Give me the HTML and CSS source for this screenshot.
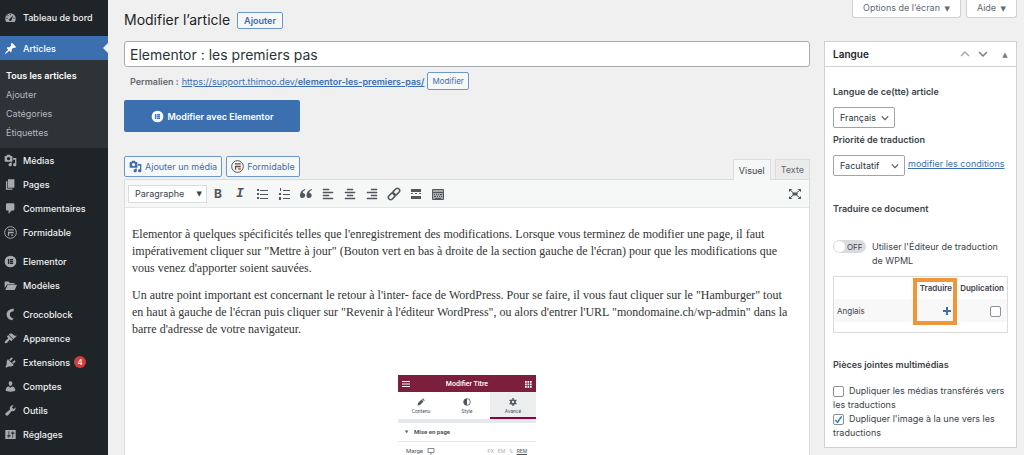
FILE: index.html
```html
<!DOCTYPE html>
<html lang="fr">
<head>
  <meta charset="UTF-8" />
  <meta name="viewport" content="width=device-width, initial-scale=1.0"/>
  <title>Modifier l’article</title>
  <link rel="stylesheet" href="styles.css">
</head>
<body>

  <!-- shared icons -->
  <svg class="sprite" aria-hidden="true">
    <symbol id="i-media" viewBox="0 0 20 20"><path d="M13 11V4c0-.55-.45-1-1-1h-1.670L9 1H5L3.670 3H2c-.55 0-1 .45-1 1v7c0 .55.45 1 1 1h10c.55 0 1-.45 1-1zM7 4.500c1.380 0 2.500 1.120 2.500 2.500S8.380 9.500 7 9.500 4.500 8.380 4.500 7 5.620 4.500 7 4.500zM14 6h5v10.500c0 1.380-1.120 2.500-2.500 2.500S14 17.880 14 16.500s1.120-2.500 2.500-2.500c.17 0 .34.02.5.05V9h-3V6zm-4 8.050V13h2v3.500c0 1.380-1.120 2.500-2.500 2.500S7 17.880 7 16.500 8.120 14 9.500 14c.17 0 .34.02.5.05z"/></symbol>
    <symbol id="i-elementor" viewBox="0 0 20 20"><path fill-rule="evenodd" d="M10 1a9 9 0 1 0 0 18 9 9 0 0 0 0-18zM6 6h2v8H6zm3 0h5v2H9zm0 3h5v2H9zm0 3h5v2H9z"/></symbol>
  </svg>

  <div class="app">
    <nav class="menu">
      <a class="menu-item" href="#"><svg viewBox="0 0 20 20"><path fill-rule="evenodd" d="M3.800 17h12.400c1.300-1.600 1.800-3.400 1.800-5.500a8 8 0 0 0-16 0c0 2.100.5 3.900 1.800 5.500zM10 4.500a1 1 0 1 1 0 2 1 1 0 0 1 0-2zM6 6a1 1 0 1 1 0 2 1 1 0 0 1 0-2zm8.500.2L11.800 13a2 2 0 1 1-2.600-1.400zM4.500 10a1 1 0 1 1 0 2 1 1 0 0 1 0-2zm11 0a1 1 0 1 1 0 2 1 1 0 0 1 0-2z"/></svg>Tableau de bord</a>
      <a class="menu-item current" href="#"><svg viewBox="0 0 20 20"><path d="M10.440 3.020l1.820-1.820 6.360 6.350-1.830 1.820c-1.050-.68-2.480-.57-3.410.36l-.75.75c-.92.93-1.040 2.350-.35 3.410l-1.830 1.820-2.410-2.410-2.800 2.790c-.42.42-3.380 2.710-3.800 2.290s1.860-3.390 2.280-3.810l2.790-2.790L4.100 9.360l1.830-1.820c1.050.69 2.480.57 3.400-.36l.75-.75c.93-.92 1.050-2.350.36-3.410z"/></svg>Articles</a>
      <div class="submenu">
        <a class="active" href="#">Tous les articles</a>
        <a href="#">Ajouter</a>
        <a href="#">Catégories</a>
        <a href="#">Étiquettes</a>
      </div>
      <a class="menu-item" href="#"><svg><use href="#i-media"/></svg>Médias</a>
      <a class="menu-item" href="#"><svg viewBox="0 0 20 20"><path d="M6 15V2h10v13H6zm-1 1h8v2H3V5h2v11z"/></svg>Pages</a>
      <a class="menu-item" href="#"><svg viewBox="0 0 20 20"><path d="M5 2h9c1.100 0 2 .9 2 2v7c0 1.100-.9 2-2 2h-2l-5 5v-5H5c-1.100 0-2-.9-2-2V4c0-1.100.9-2 2-2z"/></svg>Commentaires</a>
      <a class="menu-item" href="#"><svg viewBox="0 0 20 20"><circle cx="10" cy="10" r="9" fill="none" stroke="currentColor" stroke-width="1.500"/><path d="M6 5h9v2H6zM6 9h9v2H8v4H6zm5 4h3v2h-3z"/></svg>Formidable</a>
      <a class="menu-item group" href="#"><svg><use href="#i-elementor"/></svg>Elementor</a>
      <a class="menu-item" href="#"><svg viewBox="0 0 20 20"><path d="M1 14V4h6l2 2h7v2H5zM5.500 9H20l-3.500 8H2z"/></svg>Modèles</a>
      <a class="menu-item group" href="#"><svg viewBox="0 0 20 20"><path d="M15 1C8 1 4 5 4 10c0 4 3 8 8 9l3-3c-4-.5-6-3-6-6 0-4 3-5 6-5z"/></svg>Crocoblock</a>
      <a class="menu-item" href="#"><svg viewBox="0 0 20 20"><path d="M14.480 11.060L7.410 3.990l1.500-1.500c.5-.56 2.300-.47 3.510.32 1.210.8 1.430 1.280 2.910 2.100 1.180.64 2.450 1.260 4.450.85zm-.71.71L6.700 4.700 4.930 6.470c-.39.39-.39 1.020 0 1.410l1.060 1.060c.39.39.39 1.030 0 1.420-.6.6-1.430 1.110-2.210 1.690-.35.26-.7.53-1.010.84C1.430 14.230.4 16.080 1.400 17.070c.99 1 2.840-.03 4.180-1.360.31-.31.58-.66.85-1.020.57-.78 1.080-1.610 1.690-2.210.39-.39 1.020-.39 1.410 0l1.060 1.060c.39.39 1.020.39 1.410 0z"/></svg>Apparence</a>
      <a class="menu-item" href="#"><svg viewBox="0 0 20 20"><path d="M13.110 4.360L9.870 7.600 8 5.730l3.240-3.240c.35-.34 1.050-.2 1.560.32.52.51.66 1.210.31 1.550zm-8 1.770l.91-1.120 9.010 9.010-1.190.84c-.71.71-2.630 1.160-3.820 1.160H6.140L4.900 17.260c-.59.59-1.540.59-2.120 0-.59-.58-.59-1.530 0-2.120l1.240-1.240v-3.880c0-1.130.4-3.190 1.090-3.890zm7.260 3.970l3.240-3.240c.34-.35 1.040-.21 1.550.31.52.51.66 1.210.31 1.550l-3.240 3.250z"/></svg>Extensions <span class="badge">4</span></a>
      <a class="menu-item" href="#"><svg viewBox="0 0 20 20"><path d="M10 9.250c-2.270 0-2.730-3.440-2.730-3.440C7 4.020 7.820 2 9.970 2c2.160 0 2.980 2.020 2.710 3.810 0 0-.41 3.440-2.680 3.440zm0 2.570L12.720 10c2.390 0 4.520 2.330 4.520 4.530v2.490s-3.650 1.130-7.240 1.130c-3.650 0-7.240-1.130-7.240-1.130v-2.490c0-2.250 1.940-4.480 4.470-4.480z"/></svg>Comptes</a>
      <a class="menu-item" href="#"><svg viewBox="0 0 20 20"><path d="M16.680 9.770c-1.340 1.340-3.300 1.670-4.950.99l-5.410 6.520c-.99.99-2.590.99-3.580 0s-.99-2.590 0-3.570l6.520-5.420c-.68-1.650-.35-3.610.99-4.950 1.280-1.280 3.120-1.620 4.720-1.060l-2.890 2.890 2.820 2.820 2.860-2.870c.53 1.580.18 3.390-1.080 4.650z"/></svg>Outils</a>
      <a class="menu-item" href="#"><svg viewBox="0 0 20 20"><path fill-rule="evenodd" d="M2 3h16v14H2zM7 5v6H5v2h2v2h1v-2h2v-2H8V5zm6 0v2h-2v2h2v6h1V9h2V7h-2V5z"/></svg>Réglages</a>
    </nav>

    <main class="content">
      <header class="top">
        <h1>Modifier l’article</h1>
        <a class="btn add" href="#">Ajouter</a>
        <div class="screen-links">
          <button type="button">Options de l’écran <i>▼</i></button>
          <button type="button">Aide <i>▼</i></button>
        </div>
      </header>

      <div class="columns">
        <section class="post">
          <input class="post-title" type="text" aria-label="Titre" value="Elementor : les premiers pas">
          <div class="permalink">
            <strong>Permalien :</strong>
            <a href="#">https://support.thimoo.dev/<b>elementor-les-premiers-pas/</b></a>
            <button class="btn small" type="button">Modifier</button>
          </div>
          <button class="elementor-btn" type="button"><svg><use href="#i-elementor"/></svg>Modifier avec Elementor</button>

          <div class="editor-top">
            <button class="btn" type="button"><svg><use href="#i-media"/></svg>Ajouter un média</button>
            <button class="btn" type="button"><svg viewBox="0 0 20 20"><circle cx="10" cy="10" r="9" fill="none" stroke="#4d5055" stroke-width="1.500"/><path fill="#4d5055" d="M6 5h9v2H6zM6 9h9v2H8v4H6z"/><path fill="#f05a24" d="M11 12h4v3h-4z"/></svg>Formidable</button>
            <div class="tabs">
              <button class="tab on" type="button">Visuel</button>
              <button class="tab" type="button">Texte</button>
            </div>
          </div>

          <div class="editor">
            <div class="toolbar">
              <button class="format" type="button">Paragraphe <i>▼</i></button>
              <button class="tool" type="button" aria-label="Gras"><b>B</b></button>
              <button class="tool" type="button" aria-label="Italique"><em>I</em></button>
              <button class="tool" type="button" aria-label="Liste à puces"><svg viewBox="0 0 14 14"><path d="M2 2h2v2H2zm0 4h2v2H2zm0 4h2v2H2zM5 3h8v1H5zm0 4h8v1H5zm0 4h8v1H5z"/></svg></button>
              <button class="tool" type="button" aria-label="Liste numérotée"><svg viewBox="0 0 14 14"><path d="M3 1h1v3H3zM2 6h2v2H2zm0 4h2v3H2zM6 3h7v1H6zm0 4h7v1H6zm0 4h7v1H6z"/></svg></button>
              <button class="tool" type="button" aria-label="Citation"><svg viewBox="0 0 14 14"><path d="M6 2C3 3 1 5 1 8.500a2.600 2.600 0 1 0 2.800-2.600C3.800 4.500 4.800 3.500 6.500 3zM12.500 2c-3 1-5 3-5 6.500a2.600 2.600 0 1 0 2.800-2.600c0-1.400 1-2.400 2.700-2.900z"/></svg></button>
              <button class="tool" type="button" aria-label="Aligner à gauche"><svg viewBox="0 0 14 14"><path d="M2 2h6v1H2zm0 3h10v1H2zm0 3h6v1H2zm0 3h10v1H2z" stroke="currentColor" stroke-width=".5"/></svg></button>
              <button class="tool" type="button" aria-label="Centrer"><svg viewBox="0 0 14 14"><path d="M4 2h6v1H4zM2 5h10v1H2zm2 3h6v1H4zm-2 3h10v1H2z" stroke="currentColor" stroke-width=".5"/></svg></button>
              <button class="tool" type="button" aria-label="Aligner à droite"><svg viewBox="0 0 14 14"><path d="M6 2h6v1H6zM2 5h10v1H2zm4 3h6v1H6zm-4 3h10v1H2z" stroke="currentColor" stroke-width=".5"/></svg></button>
              <button class="tool" type="button" aria-label="Lien"><svg viewBox="0 0 14 14"><g fill="none" stroke="currentColor" stroke-width="1.600" transform="rotate(-45 7 7)"><rect x="0" y="4.700" width="7.500" height="4.600" rx="2.300"/><rect x="6.500" y="4.700" width="7.500" height="4.600" rx="2.300"/></g></svg></button>
              <button class="tool" type="button" aria-label="Lire la suite"><svg viewBox="0 0 14 14"><path d="M2 2h10v3H2zm0 4h2v1H2zm4 0h2v1H6zm4 0h2v1h-2zM2 9h10v3H2z"/></svg></button>
              <button class="tool" type="button" aria-label="Barre d’outils"><svg viewBox="0 0 14 14"><path fill="#a7aaad" stroke="currentColor" d="M1.500 2.500h11v10h-11z"/><path d="M2 5h10v1H2zm1 2h1v1H3zm2 0h1v1H5zm2 0h1v1H7zm2 0h2v1H9zM3 9h2v1H3zm3 0h1v1H6zm2 0h1v1H8zm2 0h1v1h-1zm-6 2h6v1H4z"/></svg></button>
              <button class="tool full" type="button" aria-label="Plein écran"><svg viewBox="0 0 14 14"><path d="M1 2h3.500L1 5zm12 0H9.500L13 5zM1 12h3.500L1 9zm12 0H9.500L13 9zM4.500 5.500h5v3h-5z"/><path d="M2 3l3.500 3M12 3L8.500 6M2 11l3.500-3m6.500 3L8.500 8" stroke="currentColor"/></svg></button>
            </div>
            <div class="page">
              <p>Elementor à quelques spécificités telles que l'enregistrement des modifications. Lorsque vous terminez de modifier une page, il faut impérativement cliquer sur "Mettre à jour" (Bouton vert en bas à droite de la section gauche de l'écran) pour que les modifications que vous venez d'apporter soient sauvées.</p>
              <p>Un autre point important est concernant le retour à l'inter- face de WordPress. Pour se faire, il vous faut cliquer sur le "Hamburger" tout en haut à gauche de l'écran puis cliquer sur "Revenir à l'éditeur WordPress", ou alors d'entrer l'URL "mondomaine.ch/wp-admin" dans la barre d'adresse de votre navigateur.</p>

              <div class="panel">
                <div class="panel-head">
                  <svg viewBox="0 0 8 8"><path d="M0 1h8v1H0zm0 2.500h8v1H0zM0 6h8v1H0z"/></svg>
                  <span>Modifier Titre</span>
                  <svg viewBox="0 0 8 8"><path d="M1 1h1.700v1.700H1zm2.500 0h1.700v1.700H3.500zM6 1h1.700v1.700H6zM1 3.500h1.700v1.700H1zm2.500 0h1.700v1.700H3.500zm2.500 0h1.700v1.700H6zM1 6h1.700v1.700H1zm2.500 0h1.700v1.700H3.500zM6 6h1.700v1.700H6z"/></svg>
                </div>
                <div class="panel-tabs">
                  <div><svg viewBox="0 0 8 8"><path d="M.5 7.500L1 5l3.500-3.500 2 2L3 7zM5 1l.8-.7 2 1.900L7 3z"/></svg>Contenu</div>
                  <div><svg viewBox="0 0 8 8"><circle cx="4" cy="4" r="3.300" fill="none" stroke="currentColor" stroke-width=".8"/><path d="M4 .7a3.300 3.300 0 0 0 0 6.600z"/></svg>Style</div>
                  <div class="on"><svg viewBox="0 0 8 8"><circle cx="4" cy="4" r="2" fill="none" stroke="currentColor" stroke-width="1.700"/><path d="M3.300 0h1.400v1.500H3.300zm0 6.500h1.400V8H3.300zM.2 2.600l.7-1.200 1.300.8-.7 1.200zm5.600 3.200l.7-1.200 1.300.8-.7 1.200zM.2 5.400l1.300-.8.7 1.200-1.300.8zm5.600-3.200l1.300-.8.7 1.200-1.300.8z"/></svg>Avancé</div>
                </div>
                <div class="panel-section"><i>▼</i>Mise en page</div>
                <div class="panel-row">
                  <span>Marge</span>
                  <svg viewBox="0 0 8 8"><path d="M1 1.500h6v4H1zM3 7h2" fill="none" stroke="currentColor" stroke-width=".7"/></svg>
                  <small>PX</small><small>EM</small><small>%</small><small class="unit">REM</small>
                </div>
              </div>
            </div>
          </div>
        </section>

        <aside class="metabox">
          <div class="metabox-head">
            <h2>Langue</h2>
            <button type="button" aria-label="Monter"><svg class="dim" viewBox="0 0 10 10"><path d="M1 7l4-4 4 4"/></svg></button>
            <button type="button" aria-label="Descendre"><svg viewBox="0 0 10 10"><path d="M1 3l4 4 4-4"/></svg></button>
            <button type="button" aria-label="Replier"><i>▲</i></button>
          </div>
          <div class="metabox-body">
            <label class="label" for="lang">Langue de ce(tte) article</label>
            <select id="lang"><option>Français</option></select>
            <label class="label" for="priority">Priorité de traduction</label>
            <div class="priority">
              <select id="priority"><option>Facultatif</option></select>
              <a href="#">modifier les conditions</a>
            </div>

            <h3 class="doc">Traduire ce document</h3>
            <label class="switch-row">
              <input class="switch" type="checkbox">
              <span class="track">OFF</span>
              <span>Utiliser l'Éditeur de traduction de WPML</span>
            </label>

            <table class="langs">
              <thead>
                <tr><th></th><th class="translate">Traduire</th><th class="duplicate">Duplication</th></tr>
              </thead>
              <tbody>
                <tr>
                  <td>Anglais</td>
                  <td><a href="#" aria-label="Traduire en anglais"><svg viewBox="0 0 10 10"><path d="M4 1h2v3h3v2H6v3H4V6H1V4h3z"/></svg></a></td>
                  <td><input type="checkbox" aria-label="Dupliquer en anglais"></td>
                </tr>
              </tbody>
            </table>

            <h3 class="files">Pièces jointes multimédias</h3>
            <label class="check"><input type="checkbox">Dupliquer les médias transférés vers les traductions</label>
            <label class="check"><input type="checkbox" checked>Dupliquer l'image à la une vers les traductions</label>
          </div>
        </aside>
      </div>
    </main>
  </div>

</body>
</html>
```
FILE: styles.css
```css
*,
*::before,
*::after {
  box-sizing: border-box;
}

body {
  margin: 0;
  background: #f0f0f1;
  color: #3c434a;
  font-family: Inter, "Liberation Sans", sans-serif;
  font-size: 9px;
}

button, input, select {
  font: inherit;
  color: inherit;
  margin: 0;
}

button {
  cursor: pointer;
}

a {
  color: #3b6fb0;
}

i {
  font-style: normal;
  font-family: "DejaVu Sans", sans-serif;
}

svg {
  fill: currentColor;
  flex: none;
}

h1, h2, h3 {
  margin: 0;
}

.sprite {
  display: none;
}

.app {
  display: flex;
  height: 100vh;
  overflow: hidden;
}

/* left menu */
.menu {
  flex: none;
  width: 108px;
  padding-top: 5px;
  background: #1f2428;
}

.menu-item {
  display: flex;
  align-items: center;
  gap: 6px;
  height: 24px;
  padding-left: 4px;
  color: #f0f0f1;
  font-weight: 500;
  text-decoration: none;
}

.menu-item svg {
  width: 13px;
  height: 13px;
  color: #a7aaad;
}

.menu-item.group {
  margin-top: 5px;
}

.menu-item.current {
  position: relative;
  margin-top: 7px;
  background: #3b6fb0;
  color: #fff;
}

.menu-item.current svg {
  color: #fff;
}

.menu-item.current::after {
  content: "";
  position: absolute;
  right: 0;
  top: 7px;
  border: 5px solid transparent;
  border-left-width: 0;
  border-right-color: #f0f0f1;
}

.submenu {
  padding: 6px 0 6px 6px;
  background: #2e3338;
}

.submenu a {
  display: block;
  color: #b4b9be;
  line-height: 19px;
  text-decoration: none;
}

.submenu a.active {
  color: #fff;
  font-weight: 600;
}

.badge {
  width: 12px;
  border-radius: 6px;
  margin-left: -2px;
  background: #d33c3c;
  color: #fff;
  font-size: 8px;
  line-height: 12px;
  text-align: center;
}

/* main area */
.content {
  flex: 1;
  min-width: 0;
  display: flex;
  flex-direction: column;
  padding: 0 7px 0 16px;
}

.top {
  display: flex;
  align-items: flex-start;
  height: 41px;
}

.top h1 {
  margin-top: 10px;
  color: #1d2327;
  font-size: 14px;
  font-weight: 400;
  line-height: 20px;
}

.btn {
  display: flex;
  align-items: center;
  gap: 3px;
  height: 21px;
  padding: 0 4px;
  border: 1px solid #6f97cb;
  border-radius: 2px;
  background: #f6f7f7;
  color: #3b6fb0;
  text-decoration: none;
  white-space: nowrap;
}

.btn.add {
  height: 17px;
  margin: 12px 0 0 7px;
  padding: 0 6px;
  font-weight: 600;
}

.btn.small {
  height: 18px;
  font-size: 8px;
}

.screen-links {
  display: flex;
  gap: 5px;
  margin-left: auto;
}

.screen-links button {
  height: 18px;
  padding: 0 10px;
  border: 1px solid #cfd1d4;
  border-top: 0;
  border-radius: 0 0 3px 3px;
  background: #fff;
  color: #646970;
  line-height: 14px;
}

.screen-links i {
  margin-left: 2px;
  font-size: 7px;
}

.columns {
  flex: 1;
  min-height: 0;
  display: grid;
  grid-template-columns: 1fr 193px;
  gap: 14px;
}

.post {
  display: flex;
  flex-direction: column;
  min-width: 0;
  min-height: 0;
}

.post-title {
  width: 100%;
  height: 26px;
  padding: 0 5px;
  border: 1px solid #a9adb2;
  border-radius: 3px;
  background: #fff;
  color: #2c3338;
  font-size: 14px;
}

.permalink {
  display: flex;
  align-items: center;
  gap: 3px;
  height: 18px;
  margin: 5px 0 10px;
  padding-left: 6px;
}

.permalink strong {
  color: #646970;
  font-weight: 600;
}

.permalink b {
  font-weight: 600;
}

.elementor-btn {
  flex: none;
  display: flex;
  align-items: center;
  justify-content: center;
  gap: 4px;
  width: 176px;
  height: 32px;
  border: 0;
  border-radius: 2px;
  background: #3b6fb0;
  color: #fff;
  font-weight: 600;
}

.elementor-btn svg {
  width: 13px;
  height: 13px;
}

.editor-top {
  flex: none;
  display: flex;
  align-items: flex-start;
  gap: 4px;
  height: 23px;
  margin-top: 24px;
}

.editor-top .btn svg {
  width: 13px;
  height: 13px;
}

.tabs {
  display: flex;
  align-self: flex-end;
  gap: 4px;
  margin-left: auto;
}

.tab {
  position: relative;
  height: 20px;
  padding: 0 5px;
  border: 1px solid #dcdcde;
  border-bottom: 0;
  background: #ebebec;
  color: #646970;
}

.tab.on {
  height: 21px;
  margin-bottom: -1px;
  background: #f6f7f7;
  color: #3c434a;
}

.editor {
  flex: 1;
  min-height: 0;
  border: 1px solid #dcdcde;
  border-bottom: 0;
  background: #fff;
  overflow: hidden;
}

.toolbar {
  display: flex;
  align-items: center;
  height: 28px;
  padding: 0 3px;
  border-bottom: 1px solid #e2e4e7;
  background: #f6f7f7;
}

.format {
  display: flex;
  align-items: center;
  justify-content: space-between;
  width: 79px;
  height: 18px;
  padding: 0 4px 0 6px;
  border: 1px solid #dcdcde;
  background: #fff;
}

.format i {
  font-size: 7px;
}

.tool {
  display: flex;
  align-items: center;
  justify-content: center;
  width: 22px;
  height: 20px;
  padding: 0;
  border: 0;
  background: none;
  color: #50575e;
}

.tool svg {
  width: 14px;
  height: 14px;
}

.tool b {
  font-size: 12px;
}

.tool em {
  font-family: "Liberation Mono", monospace;
  font-size: 13px;
  font-weight: 700;
}

.tool.full {
  margin-left: auto;
}

.page {
  padding: 18px 7px 0;
  color: #333;
  font-family: "Liberation Serif", serif;
  font-size: 12px;
  line-height: 17px;
}

.page p {
  margin: 0 0 10px;
  padding-right: 10px;
}

/* picture of the page builder inside the article */
.panel {
  width: 138px;
  margin: 37px auto 0;
  color: #50575e;
  font-family: Roboto, sans-serif;
  font-size: 6px;
  line-height: 8px;
}

.panel svg {
  width: 8px;
  height: 8px;
}

.panel-head {
  display: flex;
  align-items: center;
  justify-content: space-between;
  height: 17px;
  padding: 0 4px;
  background: #7b1f3d;
  color: #fff;
  font-size: 7px;
  font-weight: 500;
}

.panel-tabs {
  display: grid;
  grid-template-columns: 1fr 1fr 1fr;
  height: 27px;
  font-size: 5px;
}

.panel-tabs div {
  display: flex;
  flex-direction: column;
  align-items: center;
  gap: 1px;
  padding-top: 6px;
}

.panel-tabs .on {
  border-bottom: 2px solid #93003f;
  background: #eceef0;
}

.panel-section {
  display: flex;
  align-items: center;
  gap: 6px;
  height: 23px;
  padding-left: 7px;
  border-top: 4px solid #e6e9ec;
  border-bottom: 1px solid #e6e9ec;
  font-weight: 700;
}

.panel-section i {
  font-size: 4px;
}

.panel-row {
  display: flex;
  align-items: center;
  gap: 4px;
  height: 17px;
  padding: 0 9px 0 8px;
}

.panel-row svg {
  margin-right: auto;
}

.panel-row small {
  font-size: 5px;
  color: #a4afb7;
}

.panel-row .unit {
  color: #50575e;
  text-decoration: underline;
}

/* language box */
.metabox {
  align-self: start;
  border: 1px solid #cfd1d4;
  background: #fff;
}

.metabox-head {
  display: flex;
  align-items: center;
  gap: 8px;
  height: 25px;
  padding: 0 6px 0 8px;
  border-bottom: 1px solid #cfd1d4;
}

.metabox-head h2 {
  margin-right: auto;
  color: #1d2327;
  font-size: 10px;
  font-weight: 600;
}

.metabox-head button {
  width: 10px;
  padding: 0;
  border: 0;
  background: none;
  color: #787c82;
  line-height: 10px;
}

.metabox-head button + button + button {
  margin-left: 4px;
}

.metabox-head svg {
  display: block;
  width: 10px;
  height: 10px;
  fill: none;
  stroke: currentColor;
  stroke-width: 1.5;
}

.metabox-head .dim {
  color: #a7aaad;
}

.metabox-head i {
  font-size: 7px;
}

.metabox-body {
  padding: 18px 8px 7px;
  line-height: 14px;
}

.metabox h3,
.label {
  display: block;
  font-size: 9px;
  font-weight: 600;
  line-height: 14px;
}

.metabox select {
  appearance: none;
  display: block;
  height: 21px;
  margin: 8px 0 5px;
  padding: 0 17px 0 6px;
  border: 1px solid #a0a4a9;
  border-radius: 2px;
  background: #fff url("data:image/svg+xml,%3Csvg xmlns='http://www.w3.org/2000/svg' viewBox='0 0 10 10'%3E%3Cpath d='M1 3l4 4 4-4' fill='none' stroke='%2350575e' stroke-width='1.500'/%3E%3C/svg%3E") no-repeat right 5px center / 8px 8px;
  color: #2c3338;
}

.priority {
  display: flex;
  align-items: center;
  gap: 3px;
}

.priority select {
  width: 72px;
}

.metabox .doc {
  margin-top: 21px;
}

.switch-row {
  position: relative;
  display: flex;
  gap: 6px;
  margin-top: 24px;
}

.switch {
  position: absolute;
  opacity: 0;
}

.track {
  display: flex;
  align-items: center;
  flex: none;
  gap: 2px;
  width: 33px;
  height: 13px;
  padding: 0 1px;
  border-radius: 7px;
  background: #dcdcde;
  font-size: 8px;
}

.track::before {
  content: "";
  width: 11px;
  height: 11px;
  border-radius: 50%;
  background: #fff;
}

.langs {
  width: 100%;
  height: 57px;
  margin-top: 8px;
  padding-bottom: 10px;
  border: 1px solid #dcdcde;
  border-spacing: 0;
  font-size: 8px;
}

.langs th,
.langs td {
  padding: 0 3px;
  text-align: right;
}

.langs th:first-child,
.langs td:first-child {
  text-align: left;
}

.langs th {
  height: 22px;
  font-weight: 600;
}

.langs .translate {
  position: relative;
  width: 44px;
}

.langs .duplicate {
  width: 52px;
}

/* highlight around the translate column */
.langs .translate::after {
  content: "";
  position: absolute;
  top: 1px;
  right: -2px;
  width: 44px;
  height: 47px;
  border: 4px solid #f0953a;
}

.langs td {
  height: 22px;
  background: #f8f8f8;
}

.langs svg {
  display: inline-block;
  width: 10px;
  height: 10px;
  vertical-align: middle;
}

.metabox input[type="checkbox"]:not(.switch) {
  appearance: none;
  width: 11px;
  height: 11px;
  margin: 0 5px 0 0;
  border: 1px solid #8c8f94;
  border-radius: 2px;
  background: #fff;
  vertical-align: middle;
}

.metabox .langs input[type="checkbox"]:not(.switch) {
  margin-right: 3px;
}

.metabox input[type="checkbox"]:not(.switch):checked {
  background: #fff url("data:image/svg+xml,%3Csvg xmlns='http://www.w3.org/2000/svg' viewBox='0 0 10 10'%3E%3Cpath d='M1.500 5.500l2.500 2.500 4.500-6.500' fill='none' stroke='%233582c4' stroke-width='1.800'/%3E%3C/svg%3E") center / 9px 9px no-repeat;
}

.metabox .files {
  margin: 25px 0 12px;
}

.check {
  display: block;
  line-height: 14px;
}
```
